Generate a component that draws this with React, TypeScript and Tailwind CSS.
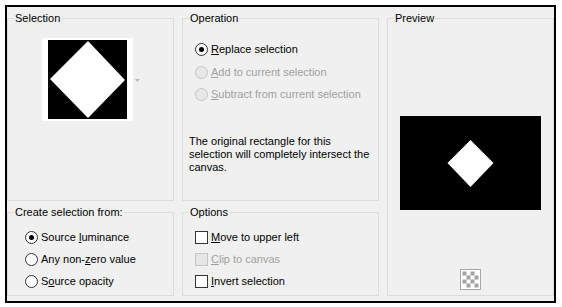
import React from 'react';

function Group({ title, className, children }: { title: string; className?: string; children?: React.ReactNode }) {
  return (
    <fieldset className={`min-w-0 border border-[#dcdcdc] ${className ?? ''}`}>
      <legend className="ml-[6px] px-[1px] h-[14px] leading-[14px]">{title}</legend>
      {children}
    </fieldset>
  );
}

function Radio({ checked, disabled, children, h = 'h-[22px]' }: { checked?: boolean; disabled?: boolean; children: React.ReactNode; h?: string }) {
  return (
    <div className={`flex items-center gap-[3px] ${h} ${disabled ? 'text-[#a0a0a0]' : 'text-black'}`}>
      <span
        className={`flex w-[13px] h-[13px] items-center justify-center rounded-full border ${
          disabled ? 'border-[#c4c4c4] bg-[#e8e8e8]' : 'border-[#333] bg-white'
        }`}
      >
        {checked && <span className="w-[5px] h-[5px] rounded-full bg-black" />}
      </span>
      <span>{children}</span>
    </div>
  );
}

function Check({ disabled, children, h = 'h-[22px]' }: { disabled?: boolean; children: React.ReactNode; h?: string }) {
  return (
    <div className={`flex items-center gap-[3px] ${h} ${disabled ? 'text-[#a0a0a0]' : 'text-black'}`}>
      <span className={`w-[13px] h-[13px] border ${disabled ? 'border-[#c4c4c4] bg-[#e6e6e6]' : 'border-[#333] bg-white'}`} />
      <span>{children}</span>
    </div>
  );
}

const U = ({ children }: { children: React.ReactNode }) => <span className="underline">{children}</span>;

function Checker() {
  const cells = [];
  for (let r = 0; r < 4; r++) {
    for (let c = 0; c < 4; c++) {
      if ((r + c) % 2 === 0) cells.push(<rect key={`${r}-${c}`} x={2.5 + c * 4} y={2.5 + r * 4} width="4" height="4" fill="#a4a4a4" />);
    }
  }
  return (
    <svg width="21" height="21" viewBox="0 0 21 21">
      <rect x="0.5" y="0.5" width="20" height="20" fill="#fff" stroke="#a8a8a8" />
      {cells}
    </svg>
  );
}

export default function App() {
  return (
    <div className="w-[562px] h-[307px] bg-white pt-[5px] pl-[5px] text-[11px] text-black font-['Liberation_Sans',Arial,sans-serif]">
      <div className="w-[551px] h-[298px] border-2 border-black bg-[#f0f0f0] pt-[4px]">
        <div className="grid grid-cols-[167px_197px_167px] grid-rows-[190px_91px] gap-x-[8px] gap-y-[4px]">
          {/* Selection */}
          <Group title="Selection">
            <div className="mt-[13px] ml-[34px] flex items-center">
              <div className="bg-white px-[6px] py-[2px]">
                <svg width="79" height="79" viewBox="0 0 79 79" className="block">
                  <rect width="79" height="79" fill="#000" />
                  <polygon points="40,1 77,40 40,78 2,39" fill="#fff" />
                </svg>
              </div>
              <svg width="5" height="3" viewBox="0 0 5 3" className="ml-[2px] mt-[2px]">
                <polygon points="0,0 5,0 2.5,3" fill="#b8b8b8" />
              </svg>
            </div>
          </Group>

          {/* Operation */}
          <Group title="Operation">
            <div className="mt-[13px] pl-[12px]">
              <Radio checked h="h-[23px]">
                <U>R</U>eplace selection
              </Radio>
              <Radio disabled>
                <U>A</U>dd to current selection
              </Radio>
              <Radio disabled>
                <U>S</U>ubtract from current selection
              </Radio>
            </div>
            <p className="mt-[30px] pl-[6px] leading-[13px]">
              The original rectangle for this
              <br />
              selection will completely intersect the
              <br />
              canvas.
            </p>
          </Group>

          {/* Preview */}
          <Group title="Preview" className="row-span-2">
            <div className="mt-[91px] flex flex-col items-center">
              <svg width="141" height="94" viewBox="0 0 141 94" className="block">
                <rect width="141" height="94" fill="#000" />
                <polygon points="70.5,24 93.5,47 70.5,71 47.5,47" fill="#fff" />
              </svg>
              <div className="mt-[59px]">
                <Checker />
              </div>
            </div>
          </Group>

          {/* Create selection from */}
          <Group title="Create selection from:">
            <div className="mt-[8px] pl-[17px]">
              <Radio checked h="h-[21px]">
                Source <U>l</U>uminance
              </Radio>
              <Radio>
                Any non-<U>z</U>ero value
              </Radio>
              <Radio>
                S<U>o</U>urce opacity
              </Radio>
            </div>
          </Group>

          {/* Options */}
          <Group title="Options">
            <div className="mt-[8px] pl-[12px]">
              <Check h="h-[21px]">
                <U>M</U>ove to upper left
              </Check>
              <Check disabled>
                <U>C</U>lip to canvas
              </Check>
              <Check>
                <U>I</U>nvert selection
              </Check>
            </div>
          </Group>
        </div>
      </div>
    </div>
  );
}
